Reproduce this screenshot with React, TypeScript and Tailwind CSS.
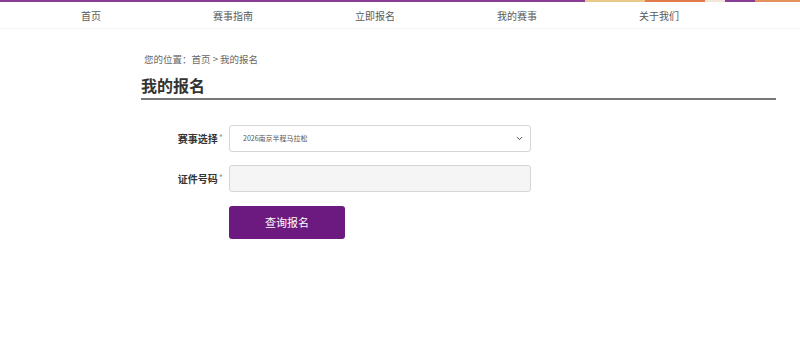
import { ChevronDown } from 'lucide-react';

const NAV = ['首页', '赛事指南', '立即报名', '我的赛事', '关于我们'];

export default function App() {
  return (
    <div className="w-[800px] h-[357px] bg-white overflow-hidden font-['Noto_Sans_CJK_SC','Noto_Sans',sans-serif]">
      {/* top colour strip */}
      <div className="flex h-[2px]">
        <div className="w-[585px] bg-[#8a3d96]" />
        <div className="w-[60px] bg-[#e9c989]" />
        <div className="w-[60px] bg-[#e27a4a]" />
        <div className="w-[20px] bg-[#f2e6d8]" />
        <div className="w-[30px] bg-[#8a3d96]" />
        <div className="flex-1 bg-[#e2925a]" />
      </div>

      {/* nav */}
      <div className="h-[27px] border-b border-[#f4f4f4]">
        <div className="ml-[20px] w-[710px] grid grid-cols-5 h-full items-center">
          {NAV.map(n => (
            <div key={n} className="text-center text-[10px] text-[#5a5a5a]">{n}</div>
          ))}
        </div>
      </div>

      <div className="ml-[141px] w-[635px]">
        <div className="mt-[23px] pl-[3px] text-[9.5px] text-[#666] leading-[14px]">您的位置：首页 &gt; 我的报名</div>
        <h1 className="mt-[9px] text-[16px] font-bold text-[#333] leading-[20px] pb-[3px] border-b-2 border-[#777]">我的报名</h1>

        <div className="mt-[25px] flex flex-col gap-[13px]">
          <div className="flex items-center">
            <label className="w-[88px] text-right pr-[6px] text-[10px] font-bold text-[#333]">
              赛事选择<span className="text-[#999] font-normal text-[9px] align-top ml-[1px]">*</span>
            </label>
            <div className="w-[302px] h-[27px] border border-[#d6d6d6] rounded-[3px] flex items-center justify-between px-[13px] pr-[6px]">
              <span className="text-[7px] text-[#555]">2026南京半程马拉松</span>
              <ChevronDown size={9} strokeWidth={2.5} className="text-[#444]" />
            </div>
          </div>
          <div className="flex items-center">
            <label className="w-[88px] text-right pr-[6px] text-[10px] font-bold text-[#333]">
              证件号码<span className="text-[#999] font-normal text-[9px] align-top ml-[1px]">*</span>
            </label>
            <div className="w-[302px] h-[27px] border border-[#d6d6d6] rounded-[3px] bg-[#f5f5f5]" />
          </div>
          <div className="flex pl-[88px] mt-[1px]">
            <button className="w-[116px] h-[33px] rounded-[3px] bg-[#6d1a80] text-white text-[11px]">查询报名</button>
          </div>
        </div>
      </div>
    </div>
  );
}
